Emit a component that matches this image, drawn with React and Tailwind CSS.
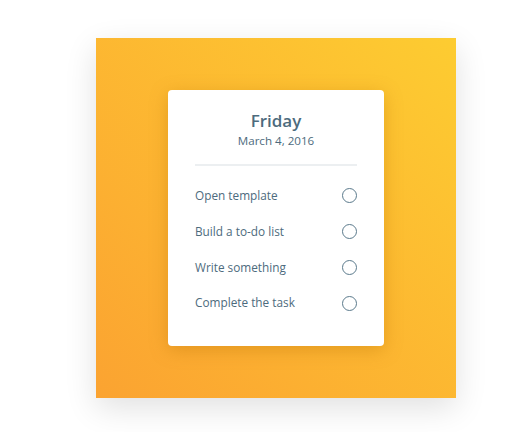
import React from 'react';

const tasks = ['Open template', 'Build a to-do list', 'Write something', 'Complete the task'];

const App = () => {
  return (
    <div className="min-h-[432px] w-full bg-white pl-[96px] pt-[38px]" style={{ fontFamily: '"Open Sans", "Noto Sans", sans-serif' }}>
      <div className="w-[360px] h-[360px] bg-gradient-to-tr from-[#fba331] to-[#fdcc31] shadow-[0_10px_30px_rgba(0,0,0,0.12)] pt-[52px] pl-[72px]">
        <div className="w-[216px] h-[256px] bg-white rounded-[4px] shadow-[0_4px_18px_rgba(180,110,0,0.35)] px-[27px] pt-[20px]">
          <div className="text-center text-[#4d6b7d]">
            <h1 className="text-[17px] leading-[22px] font-semibold">Friday</h1>
            <p className="text-[11.6px] leading-[18px]">March 4, 2016</p>
          </div>
          <div className="mt-[14px] h-[2px] bg-[#eceff1]" />
          <ul className="mt-[12px]">
            {tasks.map((t) => (
              <li key={t} className="h-[35.8px] flex items-center justify-between text-[11.8px] text-[#4d6b7d]">
                <span>{t}</span>
                <span className="w-[15px] h-[15px] rounded-full border-[1.3px] border-[#5b7a8c]" />
              </li>
            ))}
          </ul>
        </div>
      </div>
    </div>
  );
};

export default App;
